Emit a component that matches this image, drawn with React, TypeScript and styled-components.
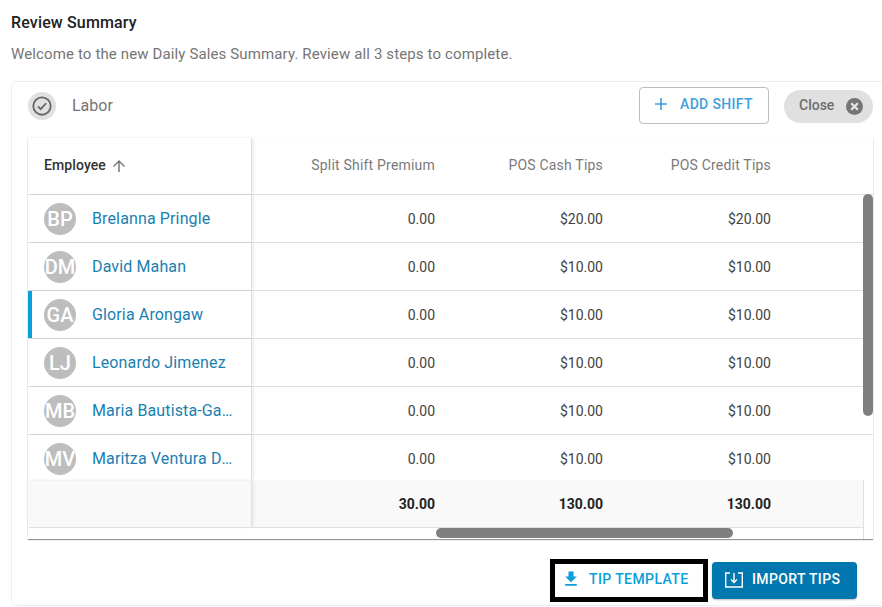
import React from 'react';
import styled, { createGlobalStyle } from 'styled-components';

const Global = createGlobalStyle`
  html, body { margin: 0; padding: 0; background: #fff; overflow: hidden; }
  body { font-family: Roboto, "Liberation Sans", sans-serif; }
`;

const Page = styled.div`
  width: 882px;
  height: 607px;
  padding: 14px 0 0 11px;
  box-sizing: border-box;
  overflow: hidden;
`;
const Title = styled.div`
  font-size: 16px;
  font-weight: 500;
  line-height: 17px;
  color: #212121;
  letter-spacing: 0.15px;
`;
const Subtitle = styled.div`
  margin-top: 14px;
  font-size: 15px;
  line-height: 18px;
  color: #757575;
  letter-spacing: 0.13px;
`;
const Card = styled.div`
  margin-top: 18px;
  width: 884px;
  height: 525px;
  box-sizing: border-box;
  border: 1px solid #eeeeee;
  border-radius: 6px;
  padding: 0 0 0 16px;
  display: flex;
  flex-direction: column;
`;
const CardHeader = styled.div`
  display: flex;
  align-items: center;
  height: 48px;
  width: 845px;
  margin-bottom: 8px;
`;
const StatusIcon = styled.div`
  width: 28px;
  height: 28px;
  border-radius: 50%;
  background: #e0e0e0;
  display: flex;
  align-items: center;
  justify-content: center;
  color: #666;
`;
const LaborLabel = styled.div`
  margin-left: 16px;
  padding-bottom: 2px;
  flex: 1;
  font-size: 16px;
  color: #757575;
`;
const AddShift = styled.button`
  width: 130px;
  height: 37px;
  margin-top: -2px;
  box-sizing: border-box;
  border: 1px solid #bdbdbd;
  border-radius: 4px;
  background: #fff;
  color: #3f9fdb;
  font: 500 14px Roboto, sans-serif;
  letter-spacing: 0.35px;
  display: flex;
  align-items: center;
  padding: 0 0 2px 14px;
  gap: 12px;
`;
const CloseChip = styled.div`
  margin-left: 15px;
  width: 89px;
  height: 33px;
  box-sizing: border-box;
  border-radius: 17px;
  background: #e0e0e0;
  color: #6e6e6e;
  font-size: 14px;
  font-weight: 500;
  display: flex;
  align-items: center;
  padding: 0 10px 0 15px;
  justify-content: space-between;
`;
const CloseText = styled.span`
  padding-bottom: 2px;
`;
const Table = styled.div`
  position: relative;
  width: 845px;
  height: 401px;
  box-sizing: border-box;
  box-shadow: 0 1px 1px rgba(0,0,0,0.4), 0 0 2px rgba(0,0,0,0.05);
  background: #fff;
`;
const Row = styled.div<{ $height: number; $bg?: string; $border?: boolean; $inset?: boolean; $top?: number }>`
  display: grid;
  grid-template-columns: 224px 199px 168px 168px 1fr;
  height: ${p => p.$height}px;
  box-sizing: border-box;
  background: ${p => p.$bg || '#fff'};
  border-bottom: ${p => (p.$border ? '1px solid #dedede' : 'none')};
  ${p => (p.$inset ? 'margin-right: 9px; border-right: 1px solid #e0e0e0;' : '')}
  & > * {
    box-sizing: border-box;
    padding-top: ${p => p.$top || 0}px;
  }
`;
const FirstCell = styled.div<{ $selected?: boolean }>`
  display: flex;
  align-items: center;
  padding-left: 16px;
  min-width: 0;
  border-right: 1px solid #e0e0e0;
  box-shadow: 2px 0 3px rgba(0,0,0,0.07)${p => (p.$selected ? ', inset 4px 0 0 #0a9fd8' : '')};
`;
const HeadEmployee = styled.span`
  font-size: 14px;
  font-weight: 500;
  color: #333;
  letter-spacing: 0.1px;
  padding-bottom: 2px;
`;
const SortIcon = styled.svg`
  margin-left: 4px;
  width: 18px;
  height: 18px;
  color: #777;
`;
const HeadCell = styled.div`
  display: flex;
  align-items: center;
  justify-content: flex-end;
  padding: 0 16px 2px 0;
  font-size: 14px;
  font-weight: 400;
  color: #7a7a7a;
  letter-spacing: 0.2px;
`;
const Cell = styled.div<{ $bold?: boolean }>`
  display: flex;
  align-items: center;
  justify-content: flex-end;
  padding-right: 16px;
  font-size: 14px;
  font-weight: ${p => (p.$bold ? 700 : 400)};
  color: ${p => (p.$bold ? '#212121' : '#424242')};
`;
const Avatar = styled.div`
  width: 32px;
  height: 32px;
  flex: none;
  border-radius: 50%;
  background: #bdbdbd;
  color: #fff;
  font-size: 20px;
  font-weight: 500;
  display: flex;
  align-items: center;
  justify-content: center;
  overflow: hidden;
`;
const Name = styled.span`
  margin-left: 16px;
  font-size: 16px;
  color: #1a7fb0;
  letter-spacing: 0.13px;
  white-space: nowrap;
  overflow: hidden;
  text-overflow: ellipsis;
  padding-right: 17px;
`;
const HScroll = styled.div`
  position: relative;
  height: 12px;
  margin: 0 9px 0 1px;
  border-top: 1px solid #e0e0e0;
  border-right: 1px solid #e0e0e0;
  box-sizing: border-box;
`;
const HThumb = styled.div`
  position: absolute;
  left: 407px;
  top: 0;
  width: 297px;
  height: 10px;
  border-radius: 5px;
  background: #7f7f7f;
`;
const VThumb = styled.div`
  position: absolute;
  right: 0;
  top: 56px;
  width: 10px;
  height: 222px;
  border-radius: 5px;
  background: #7f7f7f;
`;
const Actions = styled.div`
  width: 845px;
  display: flex;
  justify-content: flex-end;
  margin-top: 20px;
  padding-right: 16px;
  box-sizing: border-box;
  align-items: center;
`;
const TemplateButton = styled.button`
  width: 158px;
  height: 43px;
  box-sizing: border-box;
  border: 5px solid #000;
  background: #fff;
  color: #0a9fd8;
  font: 500 14px Roboto, sans-serif;
  letter-spacing: 0.4px;
  display: flex;
  align-items: center;
  padding: 0 0 3px 6px;
  gap: 8px;
`;
const ImportButton = styled.button`
  margin-left: 4px;
  width: 145px;
  height: 37px;
  box-sizing: border-box;
  border: none;
  border-radius: 4px;
  background: #0077ae;
  color: #fff;
  font: 500 14px Roboto, sans-serif;
  letter-spacing: 0.35px;
  display: flex;
  align-items: center;
  padding: 0 0 1px 12px;
  gap: 8px;
  box-shadow: 0 1px 2px rgba(0,0,0,0.25);
`;
const ImportLabel = styled.span`
  padding-bottom: 2px;
`;

const rows = [
  ['BP', 'Brelanna Pringle', '$20.00'],
  ['DM', 'David Mahan', '$10.00'],
  ['GA', 'Gloria Arongaw', '$10.00'],
  ['LJ', 'Leonardo Jimenez', '$10.00'],
  ['MB', 'Maria Bautista-Garcia', '$10.00'],
  ['MV', 'Maritza Ventura Diaz', '$10.00'],
];

export default function App() {
  return (
    <Page>
      <Global />
      <Title>Review Summary</Title>
      <Subtitle>Welcome to the new Daily Sales Summary. Review all 3 steps to complete.</Subtitle>
      <Card>
        <CardHeader>
          <StatusIcon>
            <svg width="22" height="22" viewBox="0 0 24 24" fill="none" stroke="currentColor" strokeWidth="2">
              <circle cx="12" cy="12" r="9.5" />
              <path d="M7.5 12.5l3 3 6-6.5" />
            </svg>
          </StatusIcon>
          <LaborLabel>Labor</LaborLabel>
          <AddShift>
            <svg width="14" height="14" viewBox="0 0 14 14" fill="none" stroke="currentColor" strokeWidth="1.6">
              <path d="M7 1v12M1 7h12" />
            </svg>
            ADD SHIFT
          </AddShift>
          <CloseChip>
            <CloseText>Close</CloseText>
            <svg width="17" height="17" viewBox="0 0 17 17">
              <circle cx="8.5" cy="8.5" r="8.5" fill="#757575" />
              <path d="M5.2 5.2l6.6 6.6M11.8 5.2l-6.6 6.6" stroke="#e8e8e8" strokeWidth="2.2" />
            </svg>
          </CloseChip>
        </CardHeader>
        <Table>
          <Row $height={57} $border>
            <FirstCell>
              <HeadEmployee>Employee</HeadEmployee>
              <SortIcon viewBox="0 0 24 24" fill="currentColor">
                <path d="M4 12l1.41 1.41L11 7.83V20h2V7.83l5.58 5.59L20 12l-8-8-8 8z" />
              </SortIcon>
            </FirstCell>
            <HeadCell>Split Shift Premium</HeadCell>
            <HeadCell>POS Cash Tips</HeadCell>
            <HeadCell>POS Credit Tips</HeadCell>
            <div />
          </Row>
          {rows.map(([ini, name, tip], i) => (
            <Row key={ini} $height={i === 5 ? 45 : 48} $border={i !== 5} $top={i === 5 ? 2 : 0}>
              <FirstCell $selected={i === 2}>
                <Avatar>{ini}</Avatar>
                <Name>{name}</Name>
              </FirstCell>
              <Cell>0.00</Cell>
              <Cell>{tip}</Cell>
              <Cell>{tip}</Cell>
              <div />
            </Row>
          ))}
          <Row $height={47} $bg="#f9f9f9" $inset>
            <FirstCell />
            <Cell $bold>30.00</Cell>
            <Cell $bold>130.00</Cell>
            <Cell $bold>130.00</Cell>
            <div />
          </Row>
          <HScroll>
            <HThumb />
          </HScroll>
          <VThumb />
        </Table>
        <Actions>
          <TemplateButton>
            <svg width="20" height="20" viewBox="0 0 24 24" fill="currentColor">
              <path d="M19 9h-4V3H9v6H5l7 7 7-7zM5 18v2h14v-2H5z" />
            </svg>
            TIP TEMPLATE
          </TemplateButton>
          <ImportButton>
            <svg width="20" height="18" viewBox="0 0 20 18" fill="none" stroke="#fff" strokeWidth="1.4">
              <path d="M6 2H1.7v14h16.6V2H14" />
              <path d="M10 2v9M7 8.5l3 3 3-3" />
            </svg>
            <ImportLabel>IMPORT TIPS</ImportLabel>
          </ImportButton>
        </Actions>
      </Card>
    </Page>
  );
}
